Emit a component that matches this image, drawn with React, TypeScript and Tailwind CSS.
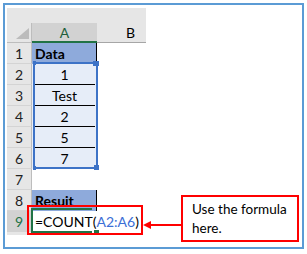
type Row = {
  n: number;
  text: string;
  kind: 'label' | 'value' | 'empty' | 'formula';
  ruled?: boolean;
};

const rows: Row[] = [
  { n: 1, text: 'Data', kind: 'label' },
  { n: 2, text: '1', kind: 'value', ruled: true },
  { n: 3, text: 'Test', kind: 'value', ruled: true },
  { n: 4, text: '2', kind: 'value', ruled: true },
  { n: 5, text: '5', kind: 'value', ruled: true },
  { n: 6, text: '7', kind: 'value' },
  { n: 7, text: '', kind: 'empty' },
  { n: 8, text: 'Resuit', kind: 'label' },
  { n: 9, text: '', kind: 'formula' },
];

function CellA({ row }: { row: Row }) {
  if (row.kind === 'label') {
    return (
      <div className="w-[65px] h-full bg-[#8eaadb] border-r border-black flex items-center pl-[3px] font-bold text-[14px] text-black">
        {row.text}
      </div>
    );
  }
  if (row.kind === 'value') {
    return (
      <div className="w-[65px] h-full bg-[#e6edf8] px-[2px]">
        <div
          className={`h-full flex items-center justify-center text-[14px] text-black ${
            row.ruled ? 'border-b border-black' : ''
          }`}
        >
          {row.text}
        </div>
      </div>
    );
  }
  if (row.kind === 'formula') {
    return (
      <div className="relative w-[65px] h-full bg-white flex items-center pl-[3px]">
        <span className="whitespace-nowrap text-[14px] text-black z-10">
          =COUNT(<span className="text-[#3b6fd6]">A2:A6</span>)
        </span>
        {/* active cell outline, right edge hidden under the edited text */}
        <div className="absolute -left-px -top-[3px] w-[61px] h-[25px] border-2 border-r-0 border-[#217346]" />
        <div className="absolute left-[62px] top-[19px] w-[5px] h-[4px] bg-[#217346]" />
      </div>
    );
  }
  return <div className="w-[65px] h-full bg-white" />;
}

function SheetRow({ row }: { row: Row }) {
  const active = row.kind === 'formula';
  return (
    <div className="flex h-[21px]">
      <div
        className={`w-[25px] h-full flex items-center justify-center border-r border-b text-[14px] ${
          active
            ? 'bg-[#d2d2d2] text-[#217346] border-r-[#217346] border-b-[#d2d2d2]'
            : 'bg-[#e6e6e6] text-[#222] border-r-[#bdbdbd] border-b-[#d4d4d4]'
        }`}
      >
        {row.n}
      </div>
      <CellA row={row} />
      <div className="w-[49px] h-full bg-white" />
    </div>
  );
}

function Sheet() {
  return (
    <div className="w-[139px] ml-[2px] mt-[3px] font-[Lato,sans-serif]">
      <div className="h-[15px] bg-[#e6e6e6]" />
      <div className="flex h-[20px]">
        <div className="w-[25px] h-full bg-[#e6e6e6] border-r border-b border-[#bdbdbd] flex items-end justify-end pr-[2px] pb-[3px]">
          <svg width="13" height="11" viewBox="0 0 13 11">
            <polygon points="0,11 13,11 13,0" fill="#bcbcbc" />
          </svg>
        </div>
        <div className="w-[65px] h-full bg-[#d2d2d2] border-b-2 border-[#217346] flex items-center justify-center text-[14px] text-[#1e5e3b]">
          A
        </div>
        <div className="w-[49px] h-full bg-[#e6e6e6] border-b border-[#a6a6a6] flex items-center pl-[29px] text-[14px] text-black">
          B
        </div>
      </div>
      <div className="relative">
        {rows.map((r) => (
          <SheetRow key={r.n} row={r} />
        ))}
        <div className="h-[3px] w-[25px] bg-[#e6e6e6]" />
        {/* referenced range A2:A6 with its corner handles */}
        <div className="absolute left-[26px] top-[19px] w-[65px] h-[107px] border-2 border-[#3d73c7]">
          <div className="absolute -left-[2px] -top-[3px] w-[3px] h-[4px] bg-[#3d73c7]" />
          <div className="absolute -right-[3px] -top-[3px] w-[6px] h-[5px] bg-[#3d73c7]" />
          <div className="absolute -left-[2px] -bottom-[3px] w-[3px] h-[4px] bg-[#3d73c7]" />
          <div className="absolute -right-[3px] -bottom-[3px] w-[5px] h-[5px] bg-[#3d73c7]" />
        </div>
      </div>
    </div>
  );
}

function Callout() {
  return (
    <div className="absolute left-[22px] top-[190px] flex items-start z-20">
      <div className="mt-[10px] w-[116px] h-[30px] border-2 border-[#ff0000]" />
      <svg className="mt-[25px]" width="38" height="10" viewBox="0 0 38 10">
        <polygon points="0,5 8,1 8,9" fill="#ff0000" />
        <rect x="7" y="4" width="31" height="2" fill="#ff0000" />
      </svg>
      <div className="w-[118px] h-[47px] border-2 border-[#ff0000] bg-white pl-[9px] pt-[3px] font-[Lato,sans-serif] text-[13.5px] leading-[19px] text-black">
        Use the formula
        <br />
        here.
      </div>
    </div>
  );
}

export default function App() {
  return (
    <div className="w-[307px] h-[254px] bg-white p-[3px]">
      <div className="relative w-[301px] h-[246px] border-2 border-[#5b9bd5] bg-white">
        <Sheet />
        <Callout />
      </div>
    </div>
  );
}
